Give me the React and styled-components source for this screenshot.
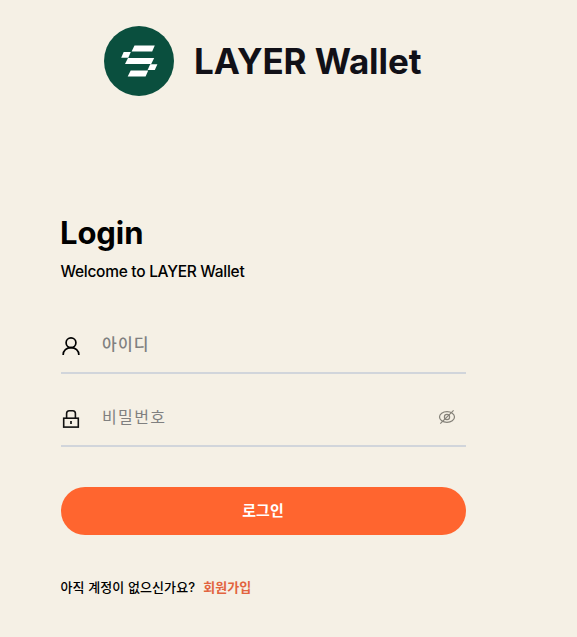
import React, { useState } from "react";
import styled, { createGlobalStyle } from "styled-components";

const COLORS = {
  background: "#f5f0e5",
  primary: "#ff652f",
  link: "#e2643f",
  line: "#d1d5db",
  logo: "#0a4f3e",
  title: "#111017",
  placeholder: "#808080",
};

const App = () => {
  const [id, setId] = useState("");
  const [password, setPassword] = useState("");
  const [visible, setVisible] = useState(false);

  return (
    <>
      <GlobalStyle />
      <Wrapper>
        <Header>
          <Logo />
          <Brand>LAYER Wallet</Brand>
        </Header>
        <Form onSubmit={(e) => e.preventDefault()}>
          <Title>Login</Title>
          <Welcome>Welcome to LAYER Wallet</Welcome>
          <Field>
            <UserIcon />
            <Input
              $weight={500}
              $spacing="1.2px"
              placeholder="아이디"
              value={id}
              onChange={(e) => setId(e.target.value)}
            />
          </Field>
          <Field>
            <LockIcon />
            <Input
              $weight={400}
              $spacing="1.4px"
              type={visible ? "text" : "password"}
              placeholder="비밀번호"
              value={password}
              onChange={(e) => setPassword(e.target.value)}
            />
            <Toggle type="button" onClick={() => setVisible(!visible)}>
              <EyeIcon />
            </Toggle>
          </Field>
          <Submit>로그인</Submit>
          <Join>
            아직 계정이 없으신가요?
            <a href="#join">회원가입</a>
          </Join>
        </Form>
      </Wrapper>
    </>
  );
};

export default App;

const Logo = () => (
  <svg width="70" height="70" viewBox="0 0 70 70">
    <circle cx="35" cy="35" r="35" fill={COLORS.logo} />
    <g fill="#fff">
      <path d="M30.5 19.4H50.8L48.2 25.4H27.6Z" />
      <path d="M19.7 26H26.8L24.3 31.7H17.2Z" />
      <path d="M24 32.1H50.2L47.2 38H21Z" />
      <path d="M46.2 38.2H53.4L50.8 44H43.6Z" />
      <path d="M26.7 44.4H44.2L41.6 50.6H23.7Z" />
    </g>
  </svg>
);

const UserIcon = () => (
  <svg width="20" height="20" viewBox="0 0 20 20" fill="none" stroke="#000">
    <circle cx="10" cy="6.7" r="4.9" strokeWidth="1.7" />
    <path d="M2.2 19V18.6C2.2 14.6 5.4 11.6 10 11.6S17.8 14.6 17.8 18.6V19" strokeWidth="1.7" />
  </svg>
);

const LockIcon = () => (
  <svg width="20" height="20" viewBox="0 0 20 20" fill="none" stroke="#111">
    <path d="M5.6 9V4.4Q5.6 1.7 8.3 1.7H11.7Q14.4 1.7 14.4 4.4V9" strokeWidth="1.6" />
    <rect x="2.7" y="9.2" width="14.6" height="8.9" strokeWidth="1.6" />
    <path d="M10 12V15" strokeWidth="1.7" />
  </svg>
);

const EyeIcon = () => (
  <svg width="18" height="18" viewBox="0 0 18 18" fill="none" stroke="#858279" strokeWidth="1.2">
    <ellipse cx="9" cy="9" rx="7.5" ry="5.3" />
    <circle cx="9" cy="9" r="2.6" />
    <path d="M2.3 15.7L15.6 2.4" />
  </svg>
);

const GlobalStyle = createGlobalStyle`
  * {
    box-sizing: border-box;
  }
  body {
    margin: 0;
    background: ${COLORS.background};
    color: #000;
    font-family: Inter, "Noto Sans CJK KR", sans-serif;
  }
`;

const Wrapper = styled.main`
  min-height: 637px;
  padding: 26px 111px 0 61px;
`;

const Header = styled.header`
  display: flex;
  align-items: center;
  gap: 20px;
  margin-left: 43px;
  height: 70px;
`;

const Brand = styled.div`
  font-size: 35px;
  font-weight: 700;
  line-height: 40px;
  letter-spacing: -0.1px;
  white-space: nowrap;
  color: ${COLORS.title};
`;

const Form = styled.form`
  display: flex;
  flex-direction: column;
  margin-top: 117px;
`;

const Title = styled.h1`
  margin: 0 0 0 -1px;
  font-size: 31px;
  font-weight: 700;
  line-height: 40px;
  letter-spacing: -0.1px;
`;

const Welcome = styled.p`
  margin: 7px 0 41px -0.5px;
  font-size: 15.5px;
  font-weight: 500;
  line-height: 24px;
  letter-spacing: -0.28px;
`;

const Field = styled.label`
  display: flex;
  align-items: center;
  height: 49px;
  margin-bottom: 24px;
  padding-bottom: 6px;
  border-bottom: 2px solid ${COLORS.line};
  > svg {
    flex: none;
    margin-top: 1px;
  }
`;

const Input = styled.input`
  flex: 1;
  min-width: 0;
  height: 28px;
  margin: 0 0 4px 21px;
  padding: 0;
  border: none;
  outline: none;
  background: transparent;
  font-family: inherit;
  font-size: 16px;
  font-weight: ${(p) => p.$weight};
  letter-spacing: ${(p) => p.$spacing};
  &::placeholder {
    color: ${COLORS.placeholder};
    opacity: 1;
  }
`;

const Toggle = styled.button`
  display: flex;
  margin: 0 10px 3px 0;
  padding: 0;
  border: none;
  background: none;
  cursor: pointer;
`;

const Submit = styled.button`
  height: 48px;
  margin-top: 16px;
  padding: 0 1px 4px 0;
  border: none;
  border-radius: 24px;
  background: ${COLORS.primary};
  color: white;
  font-family: inherit;
  font-size: 15px;
  font-weight: 700;
  cursor: pointer;
`;

const Join = styled.p`
  display: flex;
  gap: 8px;
  margin: 42px 0 0 -0.5px;
  font-size: 13px;
  font-weight: 500;
  line-height: 20px;
  letter-spacing: 0.1px;
  white-space: nowrap;
  a {
    color: ${COLORS.link};
    font-weight: 700;
    text-decoration: none;
  }
`;
